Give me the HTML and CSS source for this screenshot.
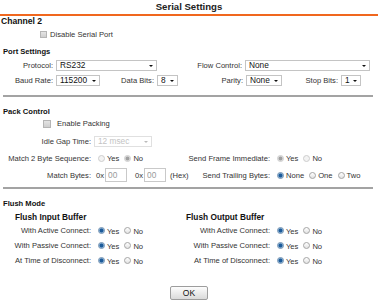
FILE: index.html
```html
<!DOCTYPE html>
<html lang="en">

<head>
    <meta charset="UTF-8">
    <title>Serial Settings</title>
    <link rel="stylesheet" href="styles.css">
</head>

<body>
    <div class="title">Serial Settings</div>
    <div class="channel">Channel 2</div>
    <div class="row chkrow disable">
        <input type="checkbox" class="chk"><span>Disable Serial Port</span>
    </div>

    <!-- port settings -->
    <div class="sec first">Port Settings</div>
    <div class="row row1">
        <label class="lbl w56">Protocol:</label>
        <span class="sel w101"><select><option>RS232</option></select></span>
        <label class="lbl w88">Flow Control:</label>
        <span class="sel w125"><select><option>None</option></select></span>
    </div>
    <div class="row">
        <label class="lbl w56">Baud Rate:</label>
        <span class="sel w44"><select><option>115200</option></select></span>
        <label class="lbl w57">Data Bits:</label>
        <span class="sel w21"><select><option>8</option></select></span>
        <label class="lbl w68">Parity:</label>
        <span class="sel w36"><select><option>None</option></select></span>
        <label class="lbl w59">Stop Bits:</label>
        <span class="sel w20"><select><option>1</option></select></span>
    </div>
    <div class="sep"></div>

    <!-- pack control -->
    <div class="sec">Pack Control</div>
    <div class="row chkrow packing">
        <input type="checkbox" class="chk"><span>Enable Packing</span>
    </div>
    <div class="row idle">
        <label class="lbl w94">Idle Gap Time:</label>
        <span class="sel w58 off"><select disabled><option>12 msec</option></select></span>
    </div>
    <div class="row match2">
        <div class="half">
            <label class="lbl w94">Match 2 Byte Sequence:</label>
            <input type="radio" class="rd" name="m2" disabled><span class="opt">Yes</span>
            <input type="radio" class="rd" name="m2" disabled checked><span class="opt">No</span>
        </div>
        <div class="half">
            <label class="lbl w87">Send Frame Immediate:</label>
            <input type="radio" class="rd" name="sf" disabled checked><span class="opt">Yes</span>
            <input type="radio" class="rd" name="sf" disabled><span class="opt">No</span>
        </div>
    </div>
    <div class="row bytes">
        <div class="half">
            <label class="lbl w94">Match Bytes:</label>
            <span class="hex">0x</span><input type="text" class="txt" value="00" disabled>
            <span class="hex gap">0x</span><input type="text" class="txt" value="00" disabled>
            <span class="unit">(Hex)</span>
        </div>
        <div class="half">
            <label class="lbl w87">Send Trailing Bytes:</label>
            <input type="radio" class="rd" name="tb" checked><span class="opt">None</span>
            <input type="radio" class="rd" name="tb"><span class="opt">One</span>
            <input type="radio" class="rd" name="tb"><span class="opt">Two</span>
        </div>
    </div>
    <div class="sep sep2"></div>

    <!-- flush mode -->
    <div class="sec flush">Flush Mode</div>
    <div class="row sub">
        <div class="half in">Flush Input Buffer</div>
        <div class="half">Flush Output Buffer</div>
    </div>
    <div class="row frow">
        <div class="half">
            <label class="lbl w94">With Active Connect:</label>
            <input type="radio" class="rd" name="ia" checked><span class="opt">Yes</span>
            <input type="radio" class="rd" name="ia"><span class="opt">No</span>
        </div>
        <div class="half">
            <label class="lbl w87">With Active Connect:</label>
            <input type="radio" class="rd" name="oa" checked><span class="opt">Yes</span>
            <input type="radio" class="rd" name="oa"><span class="opt">No</span>
        </div>
    </div>
    <div class="row frow">
        <div class="half">
            <label class="lbl w94">With Passive Connect:</label>
            <input type="radio" class="rd" name="ip" checked><span class="opt">Yes</span>
            <input type="radio" class="rd" name="ip"><span class="opt">No</span>
        </div>
        <div class="half">
            <label class="lbl w87">With Passive Connect:</label>
            <input type="radio" class="rd" name="op" checked><span class="opt">Yes</span>
            <input type="radio" class="rd" name="op"><span class="opt">No</span>
        </div>
    </div>
    <div class="row frow">
        <div class="half">
            <label class="lbl w94">At Time of Disconnect:</label>
            <input type="radio" class="rd" name="id" checked><span class="opt">Yes</span>
            <input type="radio" class="rd" name="id"><span class="opt">No</span>
        </div>
        <div class="half">
            <label class="lbl w87">At Time of Disconnect:</label>
            <input type="radio" class="rd" name="od" checked><span class="opt">Yes</span>
            <input type="radio" class="rd" name="od"><span class="opt">No</span>
        </div>
    </div>

    <div class="btnbox"><button class="ok">OK</button></div>
</body>

</html>
```

FILE: styles.css
```css
* {
    box-sizing: border-box;
}

body {
    margin: 0;
    width: 378px;
    font-family: "Liberation Sans", Arial, sans-serif;
    font-size: 7.6px;
    color: #333;
}

.title {
    height: 16px;
    line-height: 13px;
    font-size: 9.6px;
    font-weight: bold;
    text-align: center;
    color: #222;
    border-bottom: 2px solid #f0671e;
}

.channel {
    height: 11px;
    line-height: 11px;
    padding-left: 1px;
    font-size: 8.6px;
    font-weight: bold;
    color: #111;
}

.row {
    display: flex;
    align-items: center;
    height: 15px;
}

.half {
    display: flex;
    align-items: center;
    width: 186px;
    flex: none;
}

.lbl {
    flex: none;
    text-align: right;
    padding-right: 3px;
    white-space: nowrap;
}

.w20 { width: 20px; }
.w21 { width: 21px; }
.w36 { width: 36px; }
.w44 { width: 44px; }
.w56 { width: 56px; }
.w57 { width: 57px; }
.w58 { width: 58px; }
.w59 { width: 59px; }
.w68 { width: 68px; }
.w87 { width: 87px; }
.w88 { width: 88px; }
.w94 { width: 94px; }
.w101 { width: 101px; }
.w125 { width: 125px; }

.sec {
    height: 10px;
    line-height: 10px;
    padding-left: 3px;
    font-weight: bold;
    color: #111;
}

.sec.first {
    margin-top: 5px;
}

/* checkboxes */
.chk {
    appearance: none;
    margin: 0;
    width: 7px;
    height: 7px;
    border: 1px solid #b5b5b5;
    background: linear-gradient(#e4e4e4, #cfcfcf);
    flex: none;
}

.disable .chk {
    margin-left: 40px;
    margin-right: 3px;
}

.packing {
    height: 13px;
}

.packing .chk {
    margin-left: 43px;
    margin-right: 6px;
    width: 8px;
    height: 8px;
}

/* selects */
.sel {
    position: relative;
    flex: none;
    height: 11px;
}

.sel select {
    appearance: none;
    width: 100%;
    height: 11px;
    margin: 0;
    padding: 0 0 0 3px;
    border: 1px solid #c4c4c4;
    border-radius: 0;
    background: #fff;
    font-family: "Liberation Sans", Arial, sans-serif;
    font-size: 8.3px;
    line-height: 9px;
    color: #111;
}

.sel::after {
    content: "";
    position: absolute;
    right: 4px;
    top: 5px;
    border-left: 2px solid transparent;
    border-right: 2px solid transparent;
    border-top: 2px solid #111;
}

.sel.off select {
    color: #aaa;
    border-color: #d4d4d4;
}

.sel.off::after {
    border-top-color: #bbb;
}

.row1 {
    margin-top: 1px;
}

.sep {
    margin: 7px 5px 0 3px;
    border-top: 2px solid #a3a3a3;
}

.sep2 {
    margin-top: 5px;
}

.sep + .sec {
    margin-top: 10px;
}

.idle {
    margin-top: 4px;
}

.match2 {
    margin-top: 2px;
    height: 14px;
}

.bytes {
    margin-top: 3px;
    height: 14px;
}

/* radios */
.rd {
    appearance: none;
    flex: none;
    margin: 0 0 0 5px;
    width: 7px;
    height: 7px;
    border: 1px solid #a5a5a5;
    border-radius: 50%;
    background: linear-gradient(#fff, #e2e2e2);
}

.half .lbl + .rd {
    margin-left: 4px;
}

.rd:checked {
    border-color: #6f8fb0;
    background: radial-gradient(circle, #1d5b99 0 1.6px, #8db6db 2.3px, #e9f1f8 3px);
}

.rd:disabled {
    border-color: #cdcdcd;
    background: #f3f3f3;
}

.rd:disabled:checked {
    background: radial-gradient(circle, #a0a0a0 0 1.5px, #dcdcdc 2.3px, #f3f3f3 3px);
}

.opt {
    margin-left: 2px;
    margin-top: 1px;
}

/* hex inputs */
.hex {
    margin-left: 2px;
}

.hex.gap {
    margin-left: 8px;
}

.txt {
    flex: none;
    width: 22px;
    height: 14px;
    margin: 0 0 0 1px;
    padding: 0 0 0 2px;
    border: 1px solid #c9c9c9;
    background: #fff;
    font-family: "Liberation Sans", Arial, sans-serif;
    font-size: 8.3px;
    color: #9a9a9a;
}

.unit {
    margin-left: 4px;
}

/* flush mode */
.sep2 + .flush {
    margin-top: 10px;
}

.sub {
    margin-top: 3px;
    height: 10px;
    font-size: 8.3px;
    font-weight: bold;
    color: #111;
}

.sub .in {
    padding-left: 15px;
}

.sub + .frow {
    margin-top: 1px;
}

.btnbox {
    margin-top: 18px;
    text-align: center;
}

.ok {
    width: 38px;
    height: 14px;
    padding: 0;
    border: 1px solid #9d9d9d;
    border-radius: 2px;
    background: linear-gradient(#fdfdfd, #dadada);
    font-family: "Liberation Sans", Arial, sans-serif;
    font-size: 8.5px;
    color: #111;
}
```
